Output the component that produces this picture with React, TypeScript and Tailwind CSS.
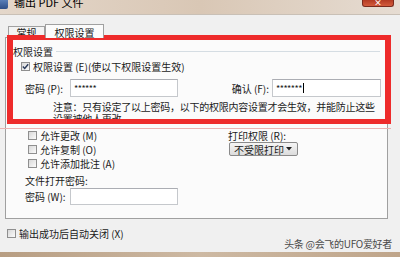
import React from 'react';

const Box = ({ checked = false }: { checked?: boolean }) => (
  <div className="w-[9px] h-[9px] shrink-0 border border-[#8f8f8f] bg-gradient-to-br from-[#d8d8d8] to-[#fbfbfb] flex items-center justify-center">
    {checked && (
      <svg width="7" height="7" viewBox="0 0 7 7">
        <path d="M0.8 3.6 L2.7 5.5 L6.2 1.2" fill="none" stroke="#2a3a5a" strokeWidth="1.4" />
      </svg>
    )}
  </div>
);

const Field = ({ value = '', w, h = 18, caret = false }: { value?: string; w: number; h?: number; caret?: boolean }) => (
  <div
    className="shrink-0 bg-white border border-[#c5c8cc] border-t-[#abadb3] flex items-center pl-[3px] text-[9px] tracking-[-0.5px] text-[#222]"
    style={{ width: w, height: h }}
  >
    {value}
    {caret && <span className="ml-px w-px h-[10px] bg-black" />}
  </div>
);

const CheckRow = ({ label, checked, className = '' }: { label: string; checked?: boolean; className?: string }) => (
  <div className={`flex items-center h-[14px] ${className}`}>
    <Box checked={checked} />
    <span className="ml-[3px] whitespace-nowrap">{label}</span>
  </div>
);

export default function App() {
  return (
    <div className="relative w-[400px] h-[257px] overflow-hidden bg-[#f0f0f0] text-[10px] leading-[13px] text-[#1a1a1a] font-['Noto_Sans_CJK_SC','Liberation_Sans',sans-serif]">
      {/* title bar */}
      <div className="h-[15px] bg-gradient-to-r from-[#e4d7ca] via-[#d9c7b5] to-[#e6dcd2] border-b border-[#c9c0b6] flex items-start">
        <div className="w-[8px] h-[9px] bg-gradient-to-b from-[#5a7fb8] to-[#2f4f87] rounded-br-[2px]" />
        <span className="ml-[6px] -mt-[4px] text-[11px] leading-[13px] text-black">输出 PDF 文件</span>
      </div>
      <div className="absolute left-[362px] top-0 w-[32px] h-[7px] rounded-b-[3px] bg-gradient-to-b from-[#b33a22] to-[#d45b3c] border border-t-0 border-[#7a2a1c] flex items-end justify-center">
        <span className="text-white text-[8px] leading-[6px] font-bold">×</span>
      </div>

      {/* tabs */}
      <div className="mt-[8px] h-[14px] pl-[8px] flex items-end">
        <div className="w-[37px] h-[11px] border border-b-0 border-[#a0a0a0] bg-[#f3f3f3] flex justify-center">
          <span className="-mt-px">常规</span>
        </div>
        <div className="relative z-10 w-[59px] h-[14px] -mb-px border border-b-0 border-[#a0a0a0] bg-[#fbfbfb] flex justify-center">
          <span className="mt-px">权限设置</span>
        </div>
      </div>

      {/* panel */}
      <div className="ml-[5px] w-[383px] h-[182px] border border-[#a0a0a0] bg-[#fbfbfb] flex flex-col">
        <div className="mt-[7px] h-[13px] pl-[7px] pr-[7px] flex items-center">
          <span>权限设置</span>
          <div className="ml-[3px] flex-1 h-px bg-[#d5dde3]" />
        </div>
        <CheckRow label="权限设置 (E)(使以下权限设置生效)" checked className="mt-px ml-[15px]" />
        <div className="mt-[6px] pl-[19px] pr-[6px] flex items-center">
          <span className="w-[45px]">密码 (P):</span>
          <Field value="******" w={108} />
          <span className="ml-auto mr-[3px]">确认 (F):</span>
          <Field value="*******" w={109} caret />
        </div>
        <div className="mt-[4px] pl-[47px] leading-[12px] tracking-[-0.25px]">
          <div>注意：只有设定了以上密码，以下的权限内容设置才会生效，并能防止这些</div>
          <div>设置被他人更改。</div>
        </div>

        <div className="mt-[3px] flex">
          <div className="w-[222px]">
            <CheckRow label="允许更改 (M)" className="ml-[22px]" />
            <CheckRow label="允许复制 (O)" className="ml-[22px]" />
            <CheckRow label="允许添加批注 (A)" className="ml-[22px]" />
            <div className="mt-[4px] ml-[19px] h-[13px]">文件打开密码:</div>
            <div className="mt-px ml-[19px] flex items-center">
              <span className="w-[45px]">密码 (W):</span>
              <Field w={108} h={17} />
            </div>
          </div>
          <div>
            <div className="h-[14px] flex items-center">打印权限 (R):</div>
            <div className="ml-px w-[69px] h-[14px] rounded-[2px] border border-[#8a8a8a] bg-gradient-to-b from-[#f5f5f5] to-[#dcdcdc] flex items-center pl-[4px]">
              <span>不受限打印</span>
              <svg className="ml-auto mr-[5px]" width="6" height="4" viewBox="0 0 6 4">
                <path d="M0 0 H6 L3 3.5 Z" fill="#222" />
              </svg>
            </div>
          </div>
        </div>
      </div>

      <CheckRow label="输出成功后自动关闭 (X)" className="mt-[7px] ml-[7px]" />
      <div className="mt-[12px] h-[6px] bg-gradient-to-r from-[#b79d82] via-[#cdb9a3] to-[#bfa58a]" />

      {/* watermark */}
      <div className="absolute right-[8px] top-[237px] text-[10px] leading-[13px] text-[#4a4a4a] tracking-[-0.3px]">
        头条 @会飞的UFO爱好者
      </div>

      {/* red annotation */}
      <div className="absolute left-[7px] top-[35px] w-[384px] h-[89px] border-x-[6px] border-y-[5px] border-[#ee2b2b]" />
      <div className="absolute left-0 top-[128px] w-[391px] h-px bg-[#eab3b3]" />
    </div>
  );
}
